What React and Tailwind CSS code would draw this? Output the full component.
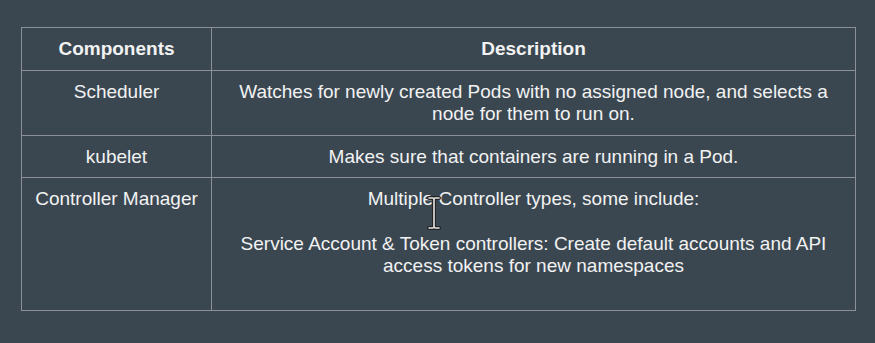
import React from "react";

const rows = [
  { c: "Scheduler", d: ["Watches for newly created Pods with no assigned node, and selects a node for them to run on."], h: "h-[65px]" },
  { c: "kubelet", d: ["Makes sure that containers are running in a Pod."], h: "h-[42px]" },
];

export default function App() {
  return (
    <div className="w-[875px] h-[343px] bg-[#3a4751] pt-[27px] pl-[21px] font-['Liberation_Sans',Arial,sans-serif] text-[#f2f2f2] text-[19px] leading-[22px] relative">
      <table className="w-[835px] border-collapse table-fixed">
        <colgroup>
          <col className="w-[190px]" />
          <col />
        </colgroup>
        <tbody>
          <tr className="h-[43px]">
            <th className="border border-[#8b9196] font-bold text-center align-middle">Components</th>
            <th className="border border-[#8b9196] font-bold text-center align-middle">Description</th>
          </tr>
          {rows.map((r) => (
            <tr key={r.c} className={r.h}>
              <td className="border border-[#8b9196] text-center align-top pt-[10px] px-[6px]">{r.c}</td>
              <td className="border border-[#8b9196] text-center align-top pt-[10px] px-[18px]">{r.d}</td>
            </tr>
          ))}
          <tr className="h-[133px]">
            <td className="border border-[#8b9196] text-center align-top pt-[10px] px-[6px]">Controller Manager</td>
            <td className="border border-[#8b9196] text-center align-top pt-[10px] px-[18px]">
              <p>Multiple Controller types, some include:</p>
              <p className="mt-[23px]">Service Account &amp; Token controllers: Create default accounts and API access tokens for new namespaces</p>
            </td>
          </tr>
        </tbody>
      </table>
      <svg className="absolute left-[426px] top-[196px]" width="16" height="34" viewBox="0 0 16 34">
        <path d="M3 2 H7 Q8 2 8 4 V30 Q8 32 7 32 H3 M13 2 H9 Q8 2 8 4 M8 30 Q8 32 9 32 H13" fill="none" stroke="#222" strokeWidth="4" strokeLinecap="round" />
        <path d="M3 2 H7 Q8 2 8 4 V30 Q8 32 7 32 H3 M13 2 H9 Q8 2 8 4 M8 30 Q8 32 9 32 H13" fill="none" stroke="#e8e8e8" strokeWidth="1.6" strokeLinecap="round" />
      </svg>
    </div>
  );
}
